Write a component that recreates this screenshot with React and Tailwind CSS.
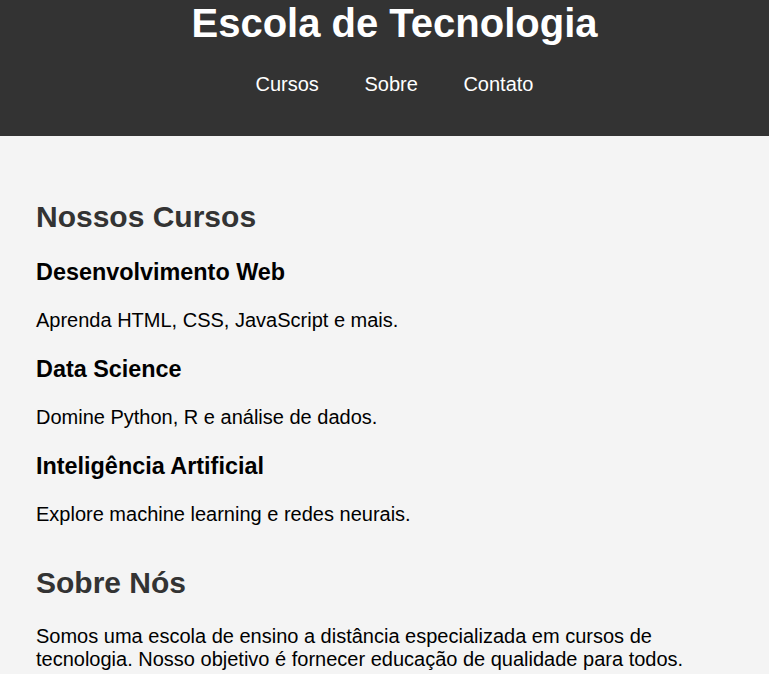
export default function App() {
  const courses = [
    { t: "Desenvolvimento Web", d: "Aprenda HTML, CSS, JavaScript e mais." },
    { t: "Data Science", d: "Domine Python, R e análise de dados." },
    { t: "Inteligência Artificial", d: "Explore machine learning e redes neurais." },
  ];
  return (
    <div className="min-h-screen bg-[#f4f4f4] font-['Liberation_Sans',Arial,sans-serif] text-[20px] leading-[normal] text-black">
      <header className="h-[136px] bg-[#333333] pl-[20px] pt-[1px] text-center text-white">
        <h1 className="m-0 text-[40px] font-bold leading-[normal]">Escola de Tecnologia</h1>
        <nav className="mt-[27px] flex justify-center gap-[45.6px] text-[20px] leading-[normal]">
          <a className="text-white">Cursos</a>
          <a className="text-white">Sobre</a>
          <a className="text-white">Contato</a>
        </nav>
      </header>
      <main className="px-[36px] pt-[39px]">
        <section>
          <h2 className="mt-[25px] mb-[25px] text-[30px] font-bold leading-[normal] text-[#333333]">Nossos Cursos</h2>
          {courses.map((c) => (
            <div key={c.t}>
              <h3 className="my-[23.4px] text-[23.4px] font-bold leading-[normal]">{c.t}</h3>
              <p className="my-[20px]">{c.d}</p>
            </div>
          ))}
        </section>
        <section>
          <h2 className="mt-[40px] mb-[25px] text-[30px] font-bold leading-[normal] text-[#333333]">Sobre Nós</h2>
          <p className="my-[20px]">
            Somos uma escola de ensino a distância especializada em cursos de tecnologia. Nosso objetivo é fornecer educação de qualidade para todos.
          </p>
        </section>
      </main>
    </div>
  );
}
